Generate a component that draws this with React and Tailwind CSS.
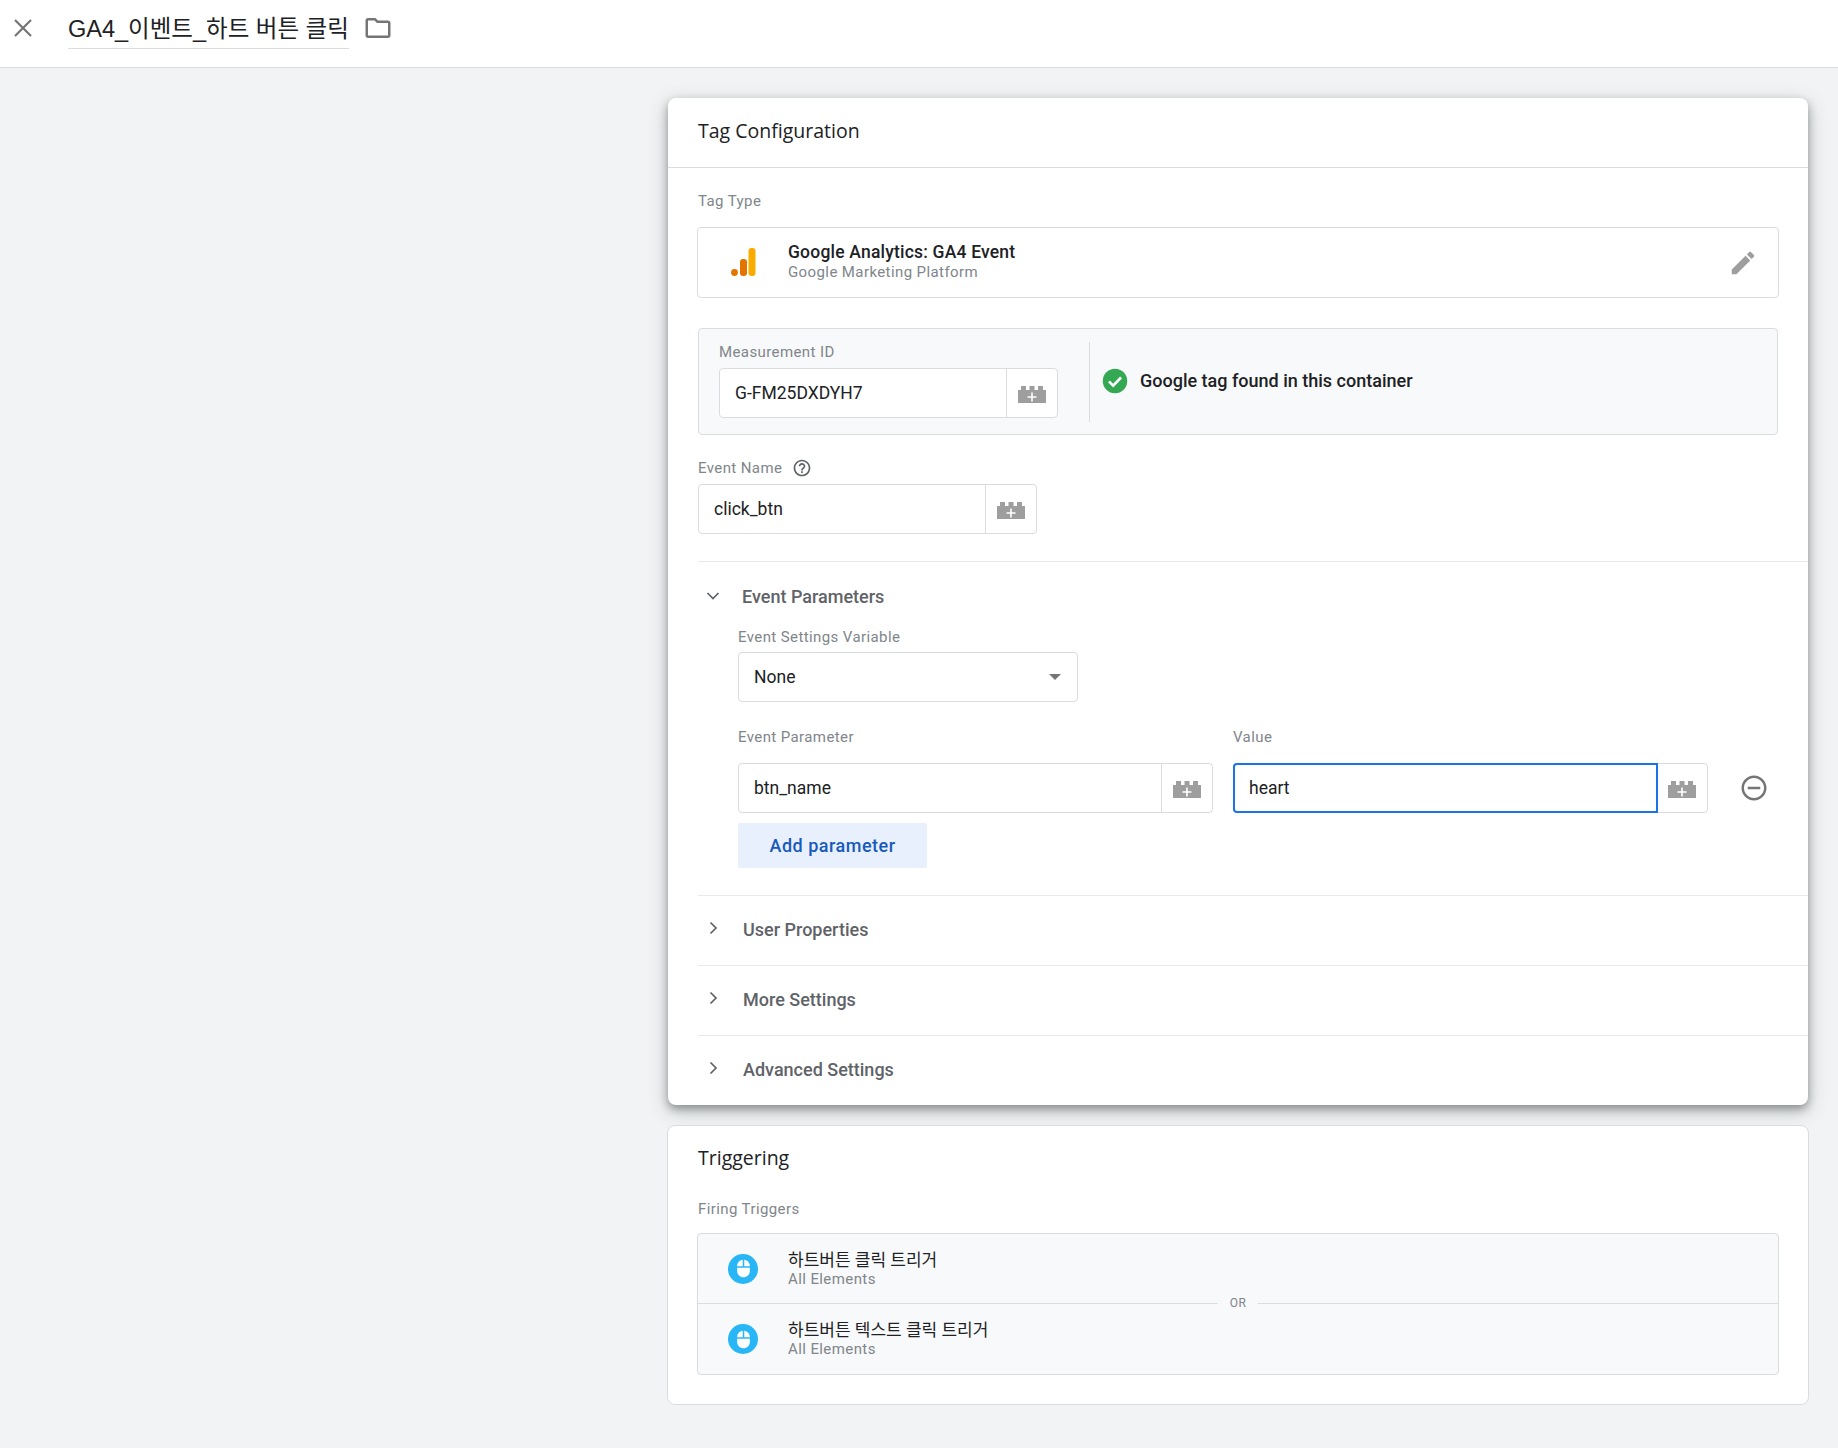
import React from "react";

const roboto = { fontFamily: "Roboto, 'Noto Sans CJK KR', sans-serif" };

const BrickIcon = () => (
  <svg width="28" height="17" viewBox="0 0 28 17">
    <path d="M0 4h3V0h5v4h3.5V0h5v4H20V0h5v4h3v13H0z" fill="#9e9e9e" />
    <path d="M13.2 6.5h1.6v3.7h3.7v1.6h-3.7v3.7h-1.6v-3.7H9.5v-1.6h3.7z" fill="#fff" />
  </svg>
);

const Chevron = ({ open }) => (
  <svg width="16" height="16" viewBox="0 0 16 16" fill="none" stroke="#5f6368" strokeWidth="1.7">
    {open ? <path d="M2.5 5 8 10.5 13.5 5" /> : <path d="M5.5 2.5 11 8l-5.5 5.5" />}
  </svg>
);

const Label = ({ children, className = "" }) => (
  <div className={`text-[15px] leading-[20px] tracking-[0.4px] text-[#80868b] ${className}`}>{children}</div>
);

// 변수 버튼 붙은 입력칸
const VarInput = ({ value, width, focus }) => (
  <div className={`flex h-[50px] rounded-[4px] border border-[#dadce0] bg-white ${width}`}>
    <div
      className={`flex flex-1 items-center text-[17.5px] text-[#202124] ${
        focus ? "-m-px rounded-l-[4px] border-2 border-[#1a73e8] pl-[14px]" : "border-r border-[#dadce0] pl-[15px]"
      }`}
    >
      {value}
    </div>
    <div className="flex w-[50px] shrink-0 items-center justify-center pt-[3px]">
      <BrickIcon />
    </div>
  </div>
);

const Section = ({ title }) => (
  <div className="ml-[30px] flex h-[70px] items-center border-t border-[#e8eaed] pb-[3px] pl-[7px]">
    <div className="mt-[-2px]">
      <Chevron />
    </div>
    <span className="ml-[22px] text-[18px] font-medium text-[#5f6368]">{title}</span>
  </div>
);

const MouseBadge = () => (
  <div className="flex h-[30px] w-[30px] items-center justify-center rounded-full bg-[#29b6f6]">
    <svg width="19" height="19" viewBox="0 0 24 24" fill="#fff">
      <path d="M13 1.07V9h7c0-4.08-3.05-7.44-7-7.93zM4 15c0 4.42 3.58 8 8 8s8-3.58 8-8v-4H4v4zm7-13.93C7.05 1.56 4 4.92 4 9h7V1.07z" />
    </svg>
  </div>
);

const TriggerRow = ({ name, height }) => (
  <div className={`flex items-center pl-[30px] ${height}`}>
    <MouseBadge />
    <div className="ml-[30px]">
      <div className="text-[17px] leading-[20px] text-[#202124]">{name}</div>
      <div className="text-[15px] leading-[18px] tracking-[0.4px] text-[#80868b]">All Elements</div>
    </div>
  </div>
);

const App = () => {
  return (
    <div className="min-h-[1448px] bg-[#f1f3f4]" style={roboto}>
      {/* top bar */}
      <div className="flex h-[68px] items-center border-b border-[#dadce0] bg-white pl-[14px]">
        <svg className="mb-[11px]" width="18" height="18" viewBox="0 0 18 18" stroke="#757575" strokeWidth="2.2">
          <path d="M1 1l16 16M17 1 1 17" />
        </svg>
        <div className="ml-[36px] mb-[18px] mt-[-1px] h-[50px] w-[281px] border-b border-[#dadce0] pt-[13px] font-['Liberation_Sans','Noto_Sans_CJK_KR',sans-serif] text-[23.5px] leading-[34px] whitespace-nowrap text-[#202124]">
          GA4_이벤트_하트 버튼 클릭
        </div>
        <svg className="ml-[14px] mb-[10px] mt-[-1px]" width="30" height="30" viewBox="0 0 24 24" fill="#757575">
          <path d="M9.17 6l2 2H20v10H4V6h5.17M10 4H4c-1.1 0-1.99.9-1.99 2L2 18c0 1.1.9 2 2 2h16c1.1 0 2-.9 2-2V8c0-1.1-.9-2-2-2h-8l-2-2z" />
        </svg>
      </div>

      <div className="pl-[668px] pr-[30px] pt-[30px]">
        {/* Tag Configuration */}
        <div className="overflow-hidden rounded-[8px] bg-white shadow-[0_4px_8px_rgba(60,64,67,0.45),0_6px_20px_rgba(60,64,67,0.25)]">
          <div className="flex h-[70px] items-center border-b border-[#dadce0] pb-[3px] pl-[30px] font-['Open_Sans',sans-serif] text-[19.5px] text-[#202124]">
            Tag Configuration
          </div>

          <div className="px-[30px] pt-[23px]">
            <Label>Tag Type</Label>
            <div className="mx-[-1px] mt-[16px] flex h-[71px] items-center rounded-[4px] border border-[#dadce0] pl-[30px] pr-[20px]">
              <svg width="30" height="30" viewBox="0 0 30 30">
                <circle cx="6.5" cy="24.5" r="3.4" fill="#e37400" />
                <rect x="12" y="11" width="7" height="17" rx="3" fill="#e37400" />
                <rect x="20.5" y="0" width="7" height="28" rx="3" fill="#f9ab00" />
              </svg>
              <div className="ml-[30px] mt-[-1px] flex-1">
                <div className="text-[17.5px] font-medium leading-[21px] tracking-[0.2px] text-[#202124]">
                  Google Analytics: GA4 Event
                </div>
                <div className="text-[15px] leading-[19px] tracking-[0.4px] text-[#80868b]">
                  Google Marketing Platform
                </div>
              </div>
              <svg width="30" height="30" viewBox="0 0 24 24" fill="#9e9e9e">
                <path d="M3 17.25V21h3.75L17.81 9.94l-3.75-3.75L3 17.25zM20.71 7.04c.39-.39.39-1.02 0-1.41l-2.34-2.34c-.39-.39-1.02-.39-1.41 0l-1.83 1.83 3.75 3.75 1.83-1.83z" />
              </svg>
            </div>

            <div className="mt-[30px] flex h-[107px] items-center rounded-[4px] border border-[#dadce0] bg-[#f8f9fa] pl-[20px]">
              <div className="w-[339px]">
                <Label className="mt-[-3px] pb-[6px]">Measurement ID</Label>
                <VarInput value="G-FM25DXDYH7" width="w-[339px]" />
              </div>
              <div className="ml-[31px] h-[80px] w-px bg-[#dadce0]" />
              <svg className="ml-[11px] mt-[-2px]" width="28" height="28" viewBox="0 0 24 24">
                <circle cx="12" cy="12" r="10.5" fill="#34a853" />
                <path d="M6.8 12.4l3.6 3.6 6.8-7" fill="none" stroke="#fff" strokeWidth="2.2" />
              </svg>
              <span className="ml-[11px] mt-[-2px] text-[18px] font-medium text-[#202124]">Google tag found in this container</span>
            </div>

            <div className="mt-[23px] flex items-center">
              <Label>Event Name</Label>
              <svg className="ml-[10px]" width="20" height="20" viewBox="0 0 24 24" fill="#5f6368">
                <path d="M11 18h2v-2h-2v2zm1-16C6.48 2 2 6.48 2 12s4.48 10 10 10 10-4.48 10-10S17.52 2 12 2zm0 18c-4.41 0-8-3.59-8-8s3.59-8 8-8 8 3.59 8 8-3.59 8-8 8zm0-14c-2.21 0-4 1.79-4 4h2c0-1.1.9-2 2-2s2 .9 2 2c0 2-3 1.75-3 5h2c0-2.25 3-2.5 3-5 0-2.21-1.79-4-4-4z" />
              </svg>
            </div>
            <div className="mt-[6px]">
              <VarInput value="click_btn" width="w-[339px]" />
            </div>
          </div>

          <div className="ml-[30px] mt-[27px] border-t border-[#e8eaed] pb-[27px] pl-[7px] pt-[25px]">
            <div className="flex h-[20px] items-center">
              <div className="mt-[-2px]">
                <Chevron open />
              </div>
              <span className="ml-[21px] mt-[-2px] text-[18px] font-medium text-[#5f6368]">Event Parameters</span>
            </div>
            <div className="pl-[33px]">
              <Label className="mt-[20px]">Event Settings Variable</Label>
              <div className="mt-[5px] flex h-[50px] w-[340px] items-center justify-between rounded-[4px] border border-[#dadce0] pl-[15px] pr-[16px] text-[17.5px] text-[#202124]">
                None
                <span className="h-0 w-0 border-x-[6px] border-t-[6px] border-x-transparent border-t-[#757575]" />
              </div>
              <div className="mt-[25px] flex">
                <Label className="w-[495px]">Event Parameter</Label>
                <Label>Value</Label>
              </div>
              <div className="mt-[16px] flex items-center">
                <VarInput value="btn_name" width="w-[475px]" />
                <div className="ml-[20px]">
                  <VarInput value="heart" width="w-[475px]" focus />
                </div>
                <svg className="ml-[31px]" width="30" height="30" viewBox="0 0 24 24" fill="#757575">
                  <path d="M7 11v2h10v-2H7zm5-9C6.48 2 2 6.48 2 12s4.48 10 10 10 10-4.48 10-10S17.52 2 12 2zm0 18c-4.41 0-8-3.59-8-8s3.59-8 8-8 8 3.59 8 8-3.59 8-8 8z" />
                </svg>
              </div>
              <div className="mt-[10px] flex h-[45px] w-[189px] items-center justify-center rounded-[2px] bg-[#e8f0fe] text-[18px] font-medium tracking-[0.5px] text-[#185abc]">
                Add parameter
              </div>
            </div>
          </div>

          <Section title="User Properties" />
          <Section title="More Settings" />
          <Section title="Advanced Settings" />
        </div>

        {/* Triggering */}
        <div className="mx-[-1px] mt-[20px] h-[280px] rounded-[8px] border border-[#dadce0] bg-white px-[29px] pt-[17px]">
          <div className="pl-px font-['Open_Sans',sans-serif] text-[19.5px] leading-[30px] text-[#202124]">Triggering</div>
          <Label className="mt-[26px] pl-px">Firing Triggers</Label>
          <div className="relative mt-[14px] rounded-[4px] border border-[#dadce0] bg-[#f8f9fa]">
            <TriggerRow name="하트버튼 클릭 트리거" height="h-[69px]" />
            <div className="h-px bg-[#dadce0]" />
            <TriggerRow name="하트버튼 텍스트 클릭 트리거" height="h-[70px]" />
            <span className="absolute left-1/2 top-[59px] -translate-x-1/2 bg-[#f8f9fa] px-[12px] text-[12px] leading-[20px] tracking-[0.3px] text-[#80868b]">
              OR
            </span>
          </div>
        </div>
      </div>
    </div>
  );
};

export default App;
